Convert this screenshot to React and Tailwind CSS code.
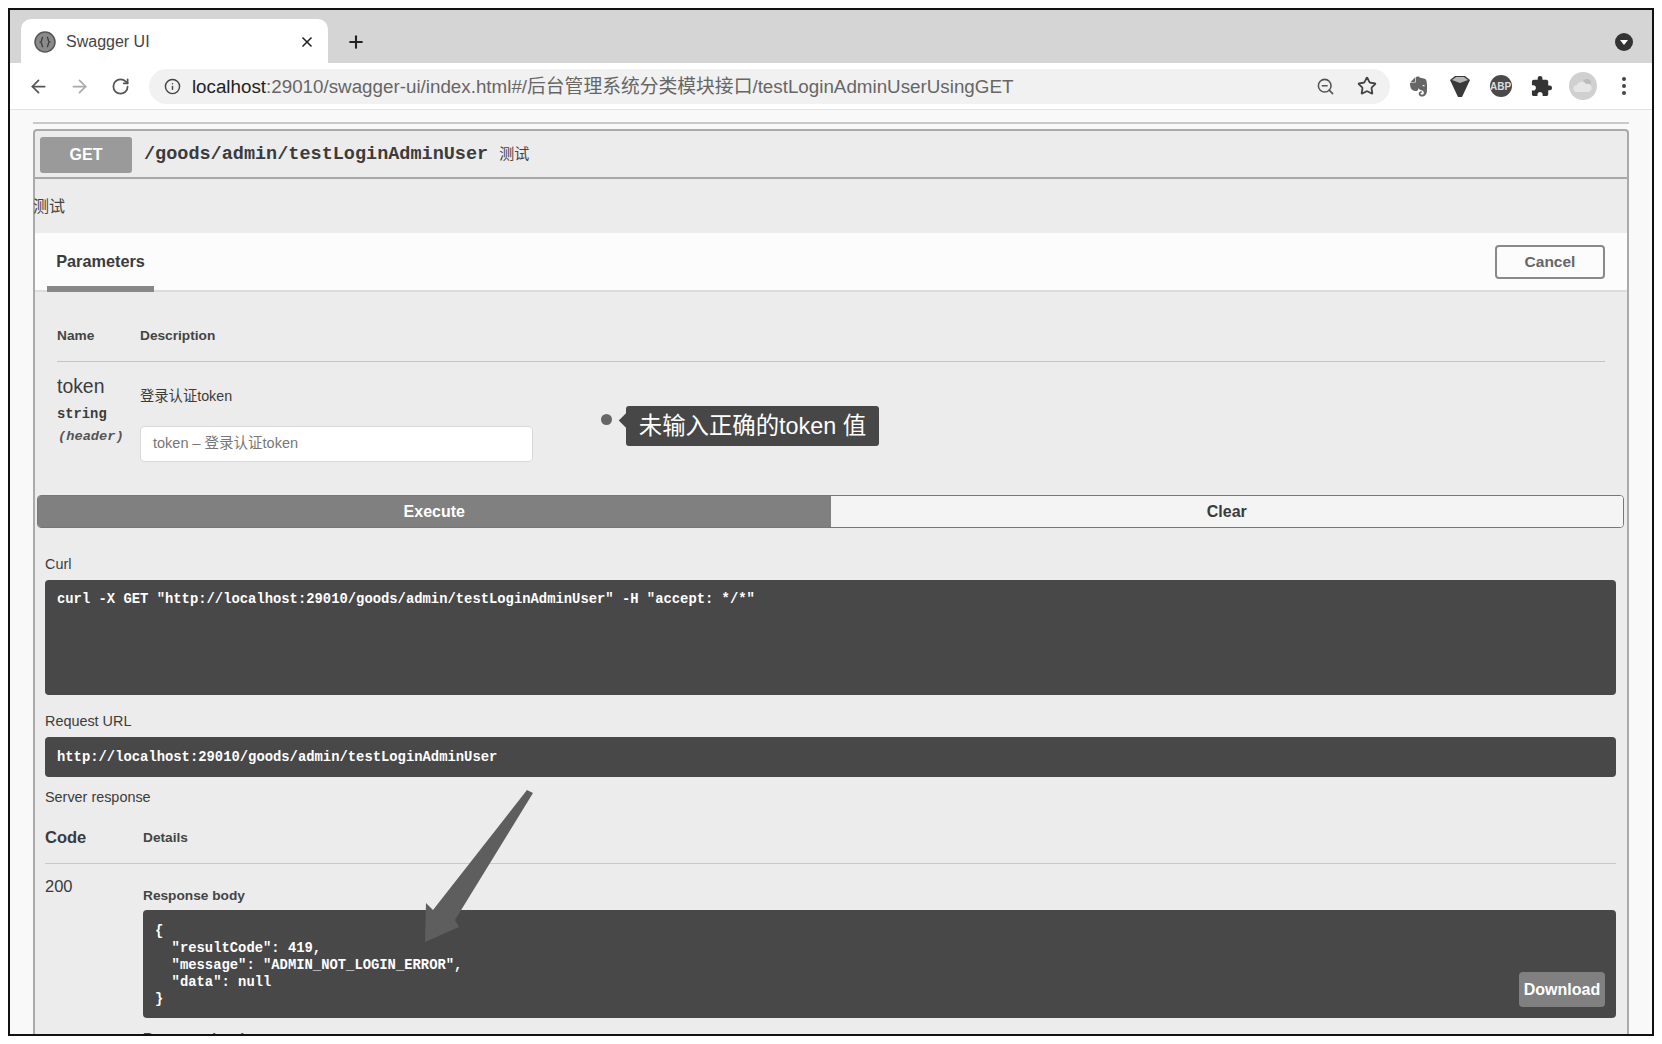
import React from "react";
import { ArrowLeft, ArrowRight, RotateCw, Info, ZoomOut, Star, X, Plus } from "lucide-react";
import { FaEvernote } from "react-icons/fa";
import { MdExtension } from "react-icons/md";

const mono = "font-['Liberation_Mono','Noto_Sans_CJK_SC',monospace] font-bold";

const ToolIcon = ({ children }) => (
  <div className="w-[41px] h-[41px] flex items-center justify-center">{children}</div>
);

const Favicon = () => (
  <svg width="22" height="22" viewBox="0 0 22 22">
    <circle cx="11" cy="11" r="10" fill="#8a8a8a" stroke="#555" strokeWidth="1.5" />
    <path d="M9 6c-2 1 0 4-2.500 5C9 12 7 15 9 16M13 6c2 1 0 4 2.500 5C13 12 15 15 13 16" fill="none" stroke="#333" strokeWidth="1.200" />
  </svg>
);

const Diamond = () => (
  <svg width="22" height="24" viewBox="0 0 22 24">
    <path d="M1 6 6 2h10l5 4-8 17h-4z" fill="#3a3a3a" />
    <path d="M3 6l4-3h8l4 3-8 3z" fill="#b5b5b5" />
  </svg>
);

const Avatar = () => (
  <div className="w-[28px] h-[28px] rounded-full bg-[#d0d0d0] flex items-center justify-center">
    <svg width="22" height="16" viewBox="0 0 22 16">
      <circle cx="15" cy="5" r="4" fill="#bbb" />
      <path d="M5 14a3.500 3.500 0 0 1 0-7 5 5 0 0 1 9-1 4 4 0 0 1 3 8z" fill="#e6e6e6" />
    </svg>
  </div>
);

const Browser = () => (
  <>
    <div className="h-[53px] bg-[#d5d5d5] flex items-end pl-[11px] pr-[19px] shrink-0">
      <div className="w-[307px] h-[44px] bg-white rounded-t-[10px] flex items-center pl-[13px] pr-[13px] pt-[2px]">
        <Favicon />
        <span className="ml-[10px] text-[16px] text-[#444]">Swagger UI</span>
        <X className="ml-auto text-[#222]" size={16} strokeWidth={2.5} />
      </div>
      <Plus className="ml-[18px] mb-[11px] text-[#222]" size={20} strokeWidth={2.5} />
      <div className="ml-auto mb-[12px] w-[18px] h-[18px] rounded-full bg-[#333] flex items-center justify-center">
        <div className="w-0 h-0 border-l-[4px] border-r-[4px] border-t-[5px] border-l-transparent border-r-transparent border-t-white" />
      </div>
    </div>
    <div className="h-[47px] bg-white border-b border-[#e2e2e2] flex items-center pl-[8px] pr-[8px] shrink-0">
      <ToolIcon><ArrowLeft className="text-[#555]" size={21} /></ToolIcon>
      <ToolIcon><ArrowRight className="text-[#aaa]" size={21} /></ToolIcon>
      <ToolIcon><RotateCw className="text-[#555]" size={19} strokeWidth={2.2} /></ToolIcon>
      <div className="ml-[8px] w-[1242px] h-[35px] bg-[#f1f1f1] rounded-full flex items-center pl-[15px] pr-[3px]">
        <Info className="text-[#444]" size={17} />
        <div className="ml-[11px] pt-[2px] text-[18.800px] text-[#666] whitespace-nowrap">
          <span className="text-[#222]">localhost</span>:29010/swagger-ui/index.html#/后台管理系统分类模块接口/testLoginAdminUserUsingGET
        </div>
        <div className="ml-auto flex items-center">
          <ToolIcon><ZoomOut className="text-[#555]" size={19} /></ToolIcon>
          <ToolIcon><Star className="text-[#444]" size={20} strokeWidth={2.2} /></ToolIcon>
        </div>
      </div>
      <div className="ml-[8px] flex items-center">
        <ToolIcon><FaEvernote className="text-[#666]" size={23} /></ToolIcon>
        <ToolIcon><Diamond /></ToolIcon>
        <ToolIcon>
          <div className="w-[22px] h-[22px] rounded-full bg-[#4a4a4a] text-[#ddd] text-[10px] font-bold flex items-center justify-center">ABP</div>
        </ToolIcon>
        <ToolIcon><MdExtension className="text-[#333]" size={23} /></ToolIcon>
        <ToolIcon><Avatar /></ToolIcon>
        <ToolIcon>
          <div className="flex flex-col gap-[3px]">
            <div className="w-[4px] h-[4px] rounded-full bg-[#444]" />
            <div className="w-[4px] h-[4px] rounded-full bg-[#444]" />
            <div className="w-[4px] h-[4px] rounded-full bg-[#444]" />
          </div>
        </ToolIcon>
      </div>
    </div>
  </>
);

const Label = ({ className = "", children }) => (
  <div className={`text-[14.400px] leading-[20px] text-[#3b3b3b] ${className}`}>{children}</div>
);

const BoldLabel = ({ className = "", children }) => (
  <div className={`text-[13.700px] leading-[20px] font-bold text-[#444] ${className}`}>{children}</div>
);

const Operation = () => (
  <div className="relative border-2 border-b-0 border-[#aaa] rounded-t-[4px] bg-[#ececec]">
    <div className="h-[48px] pt-[1px] border-b-2 border-[#a8a8a8] flex items-center pl-[5px]">
      <div className="w-[92px] h-[36px] rounded-[3px] bg-[#9a9a9a] text-white font-bold text-[16px] flex items-center justify-center">GET</div>
      <div className={`${mono} ml-[12px] text-[18.500px] text-[#3b3b3b]`}>/goods/admin/testLoginAdminUser</div>
      <div className="ml-[11px] text-[15px] text-[#444]">测试</div>
    </div>
    <div className="h-[54px] pt-[2px] flex items-center text-[16px] text-[#444] -ml-[2px]">测试</div>

    <div className="h-[59px] bg-[#fcfcfc] border-b-2 border-[#dcdcdc] flex items-stretch pl-[12px] pr-[22px]">
      <div className="w-[107px] -mb-[2px] border-b-[6px] border-[#888] flex items-center justify-center pt-[3px]">
        <span className="font-bold text-[16.300px] text-[#3b3b3b]">Parameters</span>
      </div>
      <div className="ml-auto self-center w-[110px] h-[34px] border-2 border-[#8a8a8a] rounded-[4px] flex items-center justify-center font-bold text-[15.500px] text-[#666]">Cancel</div>
    </div>

    <div className="px-[22px]">
      <div className="mt-[34px] pb-[15px] border-b border-[#c4c4c4] flex">
        <BoldLabel className="w-[83px]">Name</BoldLabel>
        <BoldLabel>Description</BoldLabel>
      </div>
      <div className="flex h-[133px]">
        <div className="w-[83px] pt-[11px]">
          <div className="text-[19.400px] leading-[26px] text-[#3b3b3b]">token</div>
          <div className={`${mono} mt-[6px] text-[13.800px] leading-[20px] text-[#3b3b3b]`}>string</div>
          <div className={`${mono} italic mt-[2px] ml-[1px] text-[13.700px] leading-[20px] text-[#555]`}>(header)</div>
        </div>
        <div className="pt-[24px]">
          <div className="text-[14.300px] leading-[20px] text-[#3b3b3b]">登录认证token</div>
          <div className="mt-[20px] w-[393px] h-[36px] bg-white border border-[#d9d9d9] rounded-[4px] flex items-center pl-[12px] text-[14.500px] text-[#777]">token – 登录认证token</div>
        </div>
      </div>
    </div>

    <div className="ml-[2px] mr-[3px] h-[33px] flex rounded-[4px] overflow-hidden border border-[#777]">
      <div className="w-1/2 bg-[#808080] text-white font-bold text-[16px] flex items-center justify-center">Execute</div>
      <div className="w-1/2 bg-[#f4f4f4] text-[#3b3b3b] font-bold text-[16px] flex items-center justify-center">Clear</div>
    </div>

    <div className="pl-[10px] pr-[11px]">
      <Label className="mt-[26px]">Curl</Label>
      <div className={`${mono} mt-[6px] h-[115px] bg-[#484848] rounded-[4px] pl-[12px] pt-[10px] text-[13.850px] leading-[18px] text-white whitespace-pre`}>{`curl -X GET "http://localhost:29010/goods/admin/testLoginAdminUser" -H "accept: */*"`}</div>
      <Label className="mt-[16px]">Request URL</Label>
      <div className={`${mono} mt-[6px] h-[40px] bg-[#484848] rounded-[4px] pl-[12px] pt-[1px] flex items-center text-[13.850px] text-white`}>http://localhost:29010/goods/admin/testLoginAdminUser</div>
      <Label className="mt-[10px]">Server response</Label>

      <div className="mt-[19px] h-[38px] pb-[14px] border-b border-[#c9c9c9] flex items-center">
        <div className="w-[98px] text-[16.500px] font-bold text-[#3b3b3b]">Code</div>
        <BoldLabel>Details</BoldLabel>
      </div>
      <div className="flex">
        <div className="w-[98px] pt-[12px] text-[16.500px] leading-[20px] text-[#3b3b3b]">200</div>
        <div className="flex-1 pt-[22px]">
          <BoldLabel>Response body</BoldLabel>
          <div className="relative mt-[4px] h-[108px] bg-[#484848] rounded-[4px] pl-[12px] pt-[13px]">
            <pre className={`${mono} text-[13.850px] leading-[17px] text-white`}>{`{
  "resultCode": 419,
  "message": "ADMIN_NOT_LOGIN_ERROR",
  "data": null
}`}</pre>
            <div className="absolute right-[11px] bottom-[11px] w-[86px] h-[35px] rounded-[4px] bg-[#808080] text-white font-bold text-[16px] flex items-center justify-center">Download</div>
          </div>
          <BoldLabel className="mt-[10px]">Response headers</BoldLabel>
        </div>
      </div>
    </div>
  </div>
);

export default function App() {
  return (
    <div className="relative w-[1662px] h-[1044px] bg-white overflow-hidden pt-[8px] pl-[8px] font-['Liberation_Sans','Noto_Sans_CJK_SC',sans-serif]">
      <div className="w-[1646px] h-[1028px] border-2 border-[#111] flex flex-col overflow-hidden">
        <Browser />
        <div className="flex-1 bg-[#f9f9f9] pl-[23px] pr-[23px] pt-[12px] overflow-hidden">
          <div className="h-[2px] bg-[#c9c9c9]" />
          <div className="mt-[5px]">
            <Operation />
          </div>
        </div>
      </div>

      {/* annotation over the screenshot */}
      <div className="absolute left-[601px] top-[414px] w-[11px] h-[11px] rounded-full bg-[#666]" />
      <div className="absolute left-[626px] top-[406px] w-[253px] h-[40px] rounded-[3px] bg-[#474747] text-white text-[23.400px] flex items-center justify-center">
        <div className="absolute -left-[5px] top-[9px] w-[11px] h-[11px] rotate-45 bg-[#474747]" />
        <span className="relative pt-[2px]">未输入正确的token 值</span>
      </div>
      <svg className="absolute left-[420px] top-[785px]" width="120" height="162" viewBox="0 0 120 162">
        <path d="M107 5l6 3L35 135l4 7L5 157 6 118l7 7z" fill="#5e5e5e" />
      </svg>
    </div>
  );
}
